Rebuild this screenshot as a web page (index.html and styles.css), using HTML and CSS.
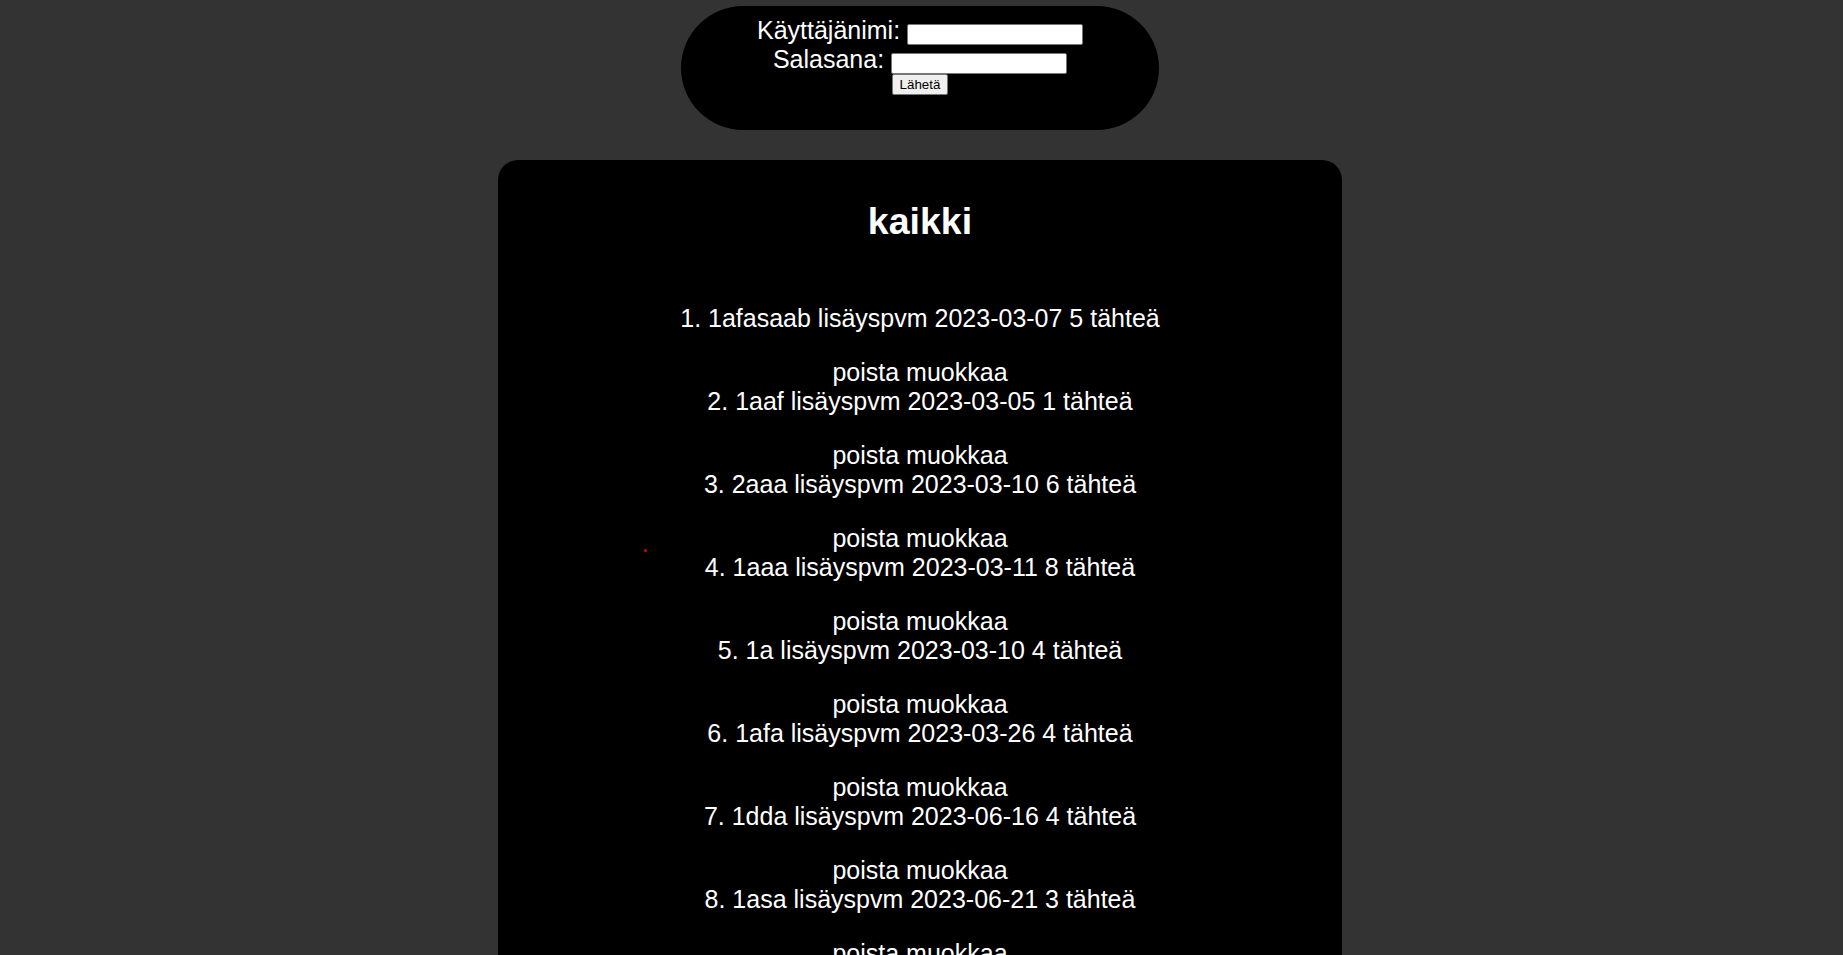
FILE: index.html
```html
<!DOCTYPE html>
<html lang="fi">
<head>
<meta charset="utf-8">
<title>kaikki</title>
<link rel="stylesheet" href="styles.css">
</head>
<body>
<div class="login">
  <form class="login-form">
    <div class="login-line">Käyttäjänimi: <input class="field" type="text"></div>
    <div class="login-line">Salasana: <input class="field" type="password"></div>
    <button class="send" type="button">Lähetä</button>
  </form>
</div>

<main class="card">
  <h1 class="title">kaikki</h1>
  <div class="list">
    <div class="item"><div class="item-text">1. 1afasaab lisäyspvm 2023-03-07 5 tähteä</div><div class="item-actions"><span class="action">poista</span> <span class="action">muokkaa</span></div></div>
    <div class="item"><div class="item-text">2. 1aaf lisäyspvm 2023-03-05 1 tähteä</div><div class="item-actions"><span class="action">poista</span> <span class="action">muokkaa</span></div></div>
    <div class="item"><div class="item-text">3. 2aaa lisäyspvm 2023-03-10 6 tähteä</div><div class="item-actions"><span class="action">poista</span> <span class="action">muokkaa</span></div></div>
    <div class="item"><div class="item-text">4. 1aaa lisäyspvm 2023-03-11 8 tähteä</div><div class="item-actions"><span class="action">poista</span> <span class="action">muokkaa</span></div></div>
    <div class="item"><div class="item-text">5. 1a lisäyspvm 2023-03-10 4 tähteä</div><div class="item-actions"><span class="action">poista</span> <span class="action">muokkaa</span></div></div>
    <div class="item"><div class="item-text">6. 1afa lisäyspvm 2023-03-26 4 tähteä</div><div class="item-actions"><span class="action">poista</span> <span class="action">muokkaa</span></div></div>
    <div class="item"><div class="item-text">7. 1dda lisäyspvm 2023-06-16 4 tähteä</div><div class="item-actions"><span class="action">poista</span> <span class="action">muokkaa</span></div></div>
    <div class="item"><div class="item-text">8. 1asa lisäyspvm 2023-06-21 3 tähteä</div><div class="item-actions"><span class="action">poista</span> <span class="action">muokkaa</span></div></div>
  </div>
</main>

<div class="cursor-dot"></div>
</body>
</html>
```

FILE: styles.css
```css
html, body {
  margin: 0;
  padding: 0;
}

body {
  background: #333333;
  color: #ffffff;
  font-family: "Liberation Sans", Arial, sans-serif;
  font-size: 25px;
  position: relative;
  padding: 6px 3px 0 0;
}

.login {
  width: 478px;
  box-sizing: border-box;
  margin: 0 auto;
  padding: 10px 0 35px;
  background: #000000;
  border-radius: 62px;
  text-align: center;
}

.login-form {
  margin: 0;
}

.login-line {
  line-height: normal;
}

.field {
  width: 176px;
  height: 21px;
  box-sizing: border-box;
  margin: 0;
  padding: 1px 2px;
  border: 1px solid #767676;
  border-radius: 2px;
  background: #ffffff;
  font-family: "Liberation Sans", Arial, sans-serif;
  font-size: 13.333px;
  vertical-align: baseline;
}

.send {
  display: block;
  margin: 0 auto;
  height: 21px;
  box-sizing: border-box;
  padding: 1px 7px;
  border: 1px solid #767676;
  border-radius: 2px;
  background: #efefef;
  color: #000000;
  font-family: "Liberation Sans", Arial, sans-serif;
  font-size: 13.333px;
  line-height: normal;
}

.card {
  width: 844px;
  box-sizing: border-box;
  margin: 30px auto 0;
  padding: 40px 0 40px;
  background: #000000;
  border-radius: 20px;
  display: flex;
  flex-direction: column;
  align-items: center;
  text-align: center;
}

.title {
  margin: 0;
  font-size: 37.5px;
  font-weight: bold;
  line-height: normal;
}

.list {
  margin-top: 61px;
  display: flex;
  flex-direction: column;
  line-height: 29px;
}

.item-text {
  margin-bottom: 25px;
}

.cursor-dot {
  position: absolute;
  left: 644px;
  top: 549px;
  width: 3px;
  height: 3px;
  border-radius: 50%;
  background: #e00000;
}
```
